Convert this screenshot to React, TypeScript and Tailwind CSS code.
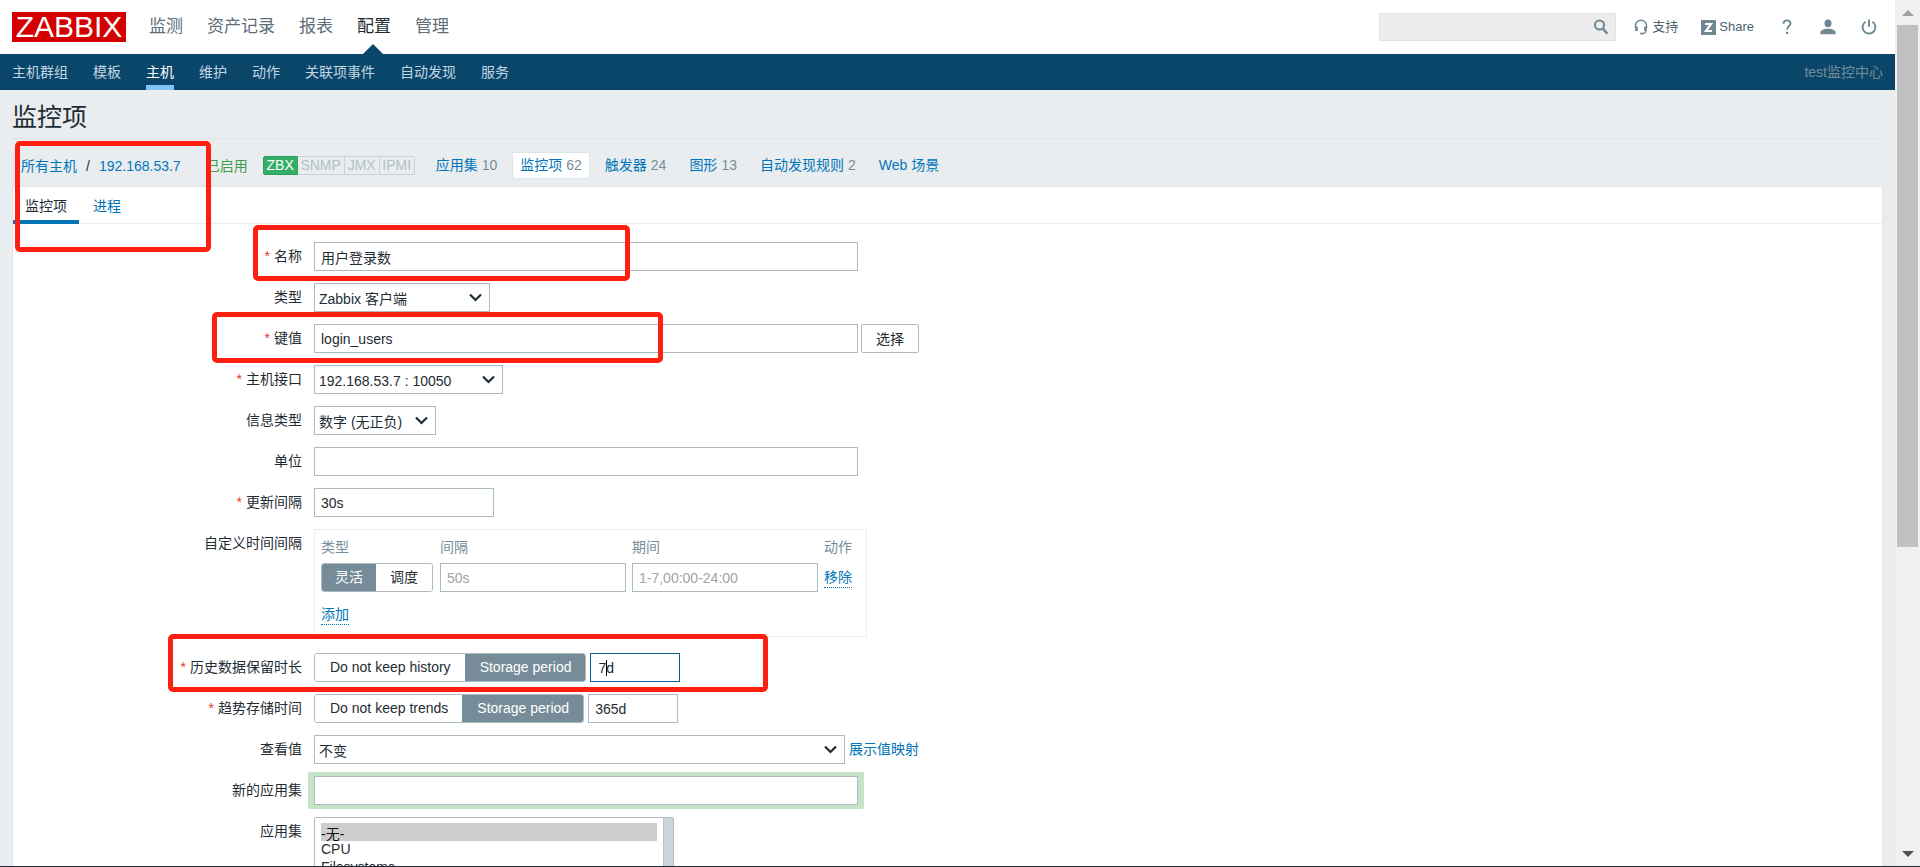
import React from "react";

const INPUT = "h-[29px] border border-[#acbbc2] bg-white px-1.5 text-[#1f2c33] placeholder-[#a3a3a3] outline-none";
const LINK = "text-[#0275b8]";

const topMenu = ["监测", "资产记录", "报表", "配置", "管理"];
const subMenu = ["主机群组", "模板", "主机", "维护", "动作", "关联项事件", "自动发现", "服务"];
const hostLinks = [
  { label: "应用集", count: "10" },
  { label: "监控项", count: "62" },
  { label: "触发器", count: "24" },
  { label: "图形", count: "13" },
  { label: "自动发现规则", count: "2" },
  { label: "Web 场景", count: "" },
];

function SearchIcon() {
  return (
    <svg width="16" height="16" viewBox="0 0 16 16" fill="none" stroke="#6f8793">
      <circle cx="6.5" cy="6" r="4.6" strokeWidth="2" />
      <path d="M9.8 9.6l4.6 5" strokeWidth="2.4" />
    </svg>
  );
}

function HeadsetIcon() {
  return (
    <svg width="14" height="16" viewBox="0 0 14 16" fill="none" stroke="#6f8793">
      <path d="M1.5 9V6.5a5.5 5.2 0 0 1 11 0V9" strokeWidth="1.5" />
      <path d="M2.500 7.500v4.500M11.500 7.500v4.500" strokeWidth="2.600" />
      <path d="M12 11.5c0 2.2-1.4 3-4 3" strokeWidth="1.3" />
      <path d="M6.2 14.6h2.6" strokeWidth="1.8" />
    </svg>
  );
}

function ShareIcon() {
  return (
    <svg width="15" height="15" viewBox="0 0 15 15">
      <rect width="15" height="15" fill="#6f8793" />
      <path d="M4 4h6L5 11h6" fill="none" stroke="#fff" strokeWidth="2.200" />
    </svg>
  );
}

function HelpIcon() {
  return (
    <svg width="10" height="16" viewBox="0 0 10 16" fill="none" stroke="#6f8793">
      <path d="M1.5 4.8C1.5 2.6 2.8 1.4 5 1.4s3.5 1.2 3.5 3.1C8.5 7 5.1 7.2 5.1 10.8" strokeWidth="1.9" />
      <path d="M4 13.9h2.2" strokeWidth="2.2" />
    </svg>
  );
}

function UserIcon() {
  return (
    <svg width="16" height="16" viewBox="0 0 16 16" fill="#6f8793">
      <ellipse cx="8" cy="4.3" rx="3.5" ry="3.9" />
      <path d="M.4 15.3v-1.6C.4 11.3 4 9.8 8 9.8s7.6 1.5 7.6 3.9v1.6z" />
    </svg>
  );
}

function PowerIcon() {
  return (
    <svg width="16" height="16" viewBox="0 0 16 16" fill="none" stroke="#6f8793" strokeWidth="1.9">
      <path d="M4.6 2.7a6.4 6.4 0 1 0 6.8 0" />
      <path d="M8 .4v7.4" />
    </svg>
  );
}

function Row({ label, htmlFor, required, children }: { label: string; htmlFor?: string; required?: boolean; children: React.ReactNode }) {
  return (
    <div className="mb-3 flex min-h-[29px] items-start gap-3">
      <label htmlFor={htmlFor} className="w-[289px] shrink-0 text-right leading-[28px]">
        {required && <span className="mr-1 text-[#e33734]">*</span>}
        {label}
      </label>
      <div className="flex items-start">{children}</div>
    </div>
  );
}

function Select({ id, value, width }: { id: string; value: string; width: string }) {
  return (
    <div className={`relative ${width}`}>
      <select id={id} className="block h-[29px] w-full appearance-none border border-[#acbbc2] bg-white px-1 pt-0.5 text-[#1f2c33] outline-none">
        <option>{value}</option>
      </select>
      <svg className="pointer-events-none absolute right-2 top-2.5" width="13" height="9" viewBox="0 0 13 9" fill="none" stroke="#1f2c33" strokeWidth="2.2">
        <path d="M1 1.500l5.500 5.500L12 1.500" />
      </svg>
    </div>
  );
}

function Segmented({ name, options, selected, pad }: { name: string; options: string[]; selected: number; pad: string }) {
  return (
    <div className="flex h-[29px] overflow-hidden rounded-[3px] border border-[#acbbc2] leading-[27px]" role="radiogroup">
      {options.map((o, i) => (
        <label key={o} className={`${pad} ${i === selected ? "-m-px bg-[#768d99] py-px text-white" : "bg-white"}`}>
          <input type="radio" name={name} defaultChecked={i === selected} className="sr-only" />
          {o}
        </label>
      ))}
    </div>
  );
}

function Header() {
  return (
    <header>
      <div className="flex h-[54px] items-center bg-white pl-3 pr-[18px]">
        <a href="#" className="flex h-[30px] w-[114px] items-center justify-center bg-[#d40000] text-3xl leading-none text-white">ZABBIX</a>
        <nav className="ml-[23px] flex h-full gap-6 text-[17px] leading-[54px]">
          {topMenu.map((m) => (
            <a key={m} href="#" className={m === "配置" ? "relative text-[#1f2c33]" : "text-[#5b6e79]"}>
              {m}
              {m === "配置" && (
                <svg className="absolute bottom-0 left-1.5" width="20" height="10" viewBox="0 0 20 10">
                  <path d="M0 10L10 0l10 10z" fill="#0a466a" />
                </svg>
              )}
            </a>
          ))}
        </nav>
        <div className="ml-auto flex items-center text-[13px] text-[#4f636e]">
          <div className="flex h-7 w-[237px] items-center border border-[#dfe4e7] bg-[#ececec] pr-1.5">
            <input aria-label="搜索" className="min-w-0 flex-1 bg-transparent px-1.5 outline-none" />
            <button type="button" aria-label="查找"><SearchIcon /></button>
          </div>
          <a href="#" className="ml-[18px] flex items-center gap-1"><HeadsetIcon />支持</a>
          <a href="#" className="ml-[23px] flex items-center gap-[3px]"><ShareIcon />Share</a>
          <a href="#" aria-label="帮助" className="ml-[28px]"><HelpIcon /></a>
          <a href="#" aria-label="用户" className="ml-[28px]"><UserIcon /></a>
          <a href="#" aria-label="退出" className="ml-[25px]"><PowerIcon /></a>
        </div>
      </div>
      <div className="flex h-9 justify-between bg-[#0a466a] px-3 leading-[36px]">
        <nav className="flex gap-[25px]">
          {subMenu.map((m) => (
            <a key={m} href="#" className={m === "主机" ? "border-b-[5px] border-[#81c4f5] text-white" : "text-[#c3d6e3]"}>{m}</a>
          ))}
        </nav>
        <span className="text-[#768d99]">test监控中心</span>
      </div>
    </header>
  );
}

function HostBar() {
  return (
    <div className="mb-[7px] flex h-[27px] items-center whitespace-nowrap pl-[9px]">
      <a href="#" className={LINK}>所有主机</a>
      <span className="mx-[9px]">/</span>
      <a href="#" className={LINK}>192.168.53.7</a>
      <span className="ml-[25px] text-[#429e47]">已启用</span>
      <div className="ml-[15px] flex h-[19px] text-center leading-[17px]">
        <span className="w-[35px] rounded-l-[2px] border border-[#2f9f5e] bg-[#34af67] text-white">ZBX</span>
        <span className="w-[47px] border-y border-r border-[#c8d2d7] text-[#b3bfc5]">SNMP</span>
        <span className="w-[35px] border-y border-r border-[#c8d2d7] text-[#b3bfc5]">JMX</span>
        <span className="w-[35px] rounded-r-[2px] border-y border-r border-[#c8d2d7] text-[#b3bfc5]">IPMI</span>
      </div>
      <nav className="ml-[13px] flex gap-[7px]">
        {hostLinks.map((l) => (
          <a
            key={l.label}
            href="#"
            className={`flex h-[27px] items-center gap-1 rounded-[2px] border px-[7px] pb-px ${LINK} ${l.label === "监控项" ? "border-[#dfe4e7] bg-white" : "border-transparent"}`}
          >
            {l.label}
            {l.count && <span className="text-[#768d99]">{l.count}</span>}
          </a>
        ))}
      </nav>
    </div>
  );
}

function IntervalTable() {
  return (
    <div className="mb-1 h-[108px] border border-[#ebeef0] px-1.5 pr-3 pt-1.5">
      <table>
        <thead>
          <tr className="text-left text-[#768d99]">
            <th className="h-[27px] w-[119px] pb-1.5 font-normal">类型</th>
            <th className="w-[192px] pb-1.5 font-normal">间隔</th>
            <th className="w-[192px] pb-1.5 font-normal">期间</th>
            <th className="w-[30px] pb-1.5 font-normal">动作</th>
          </tr>
        </thead>
        <tbody>
          <tr className="align-top">
            <td><div className="flex"><Segmented name="interval" options={["灵活", "调度"]} selected={0} pad="px-3.5" /></div></td>
            <td><input aria-label="间隔" placeholder="50s" className={`block w-[186px] ${INPUT}`} /></td>
            <td><input aria-label="期间" placeholder="1-7,00:00-24:00" className={`block w-[186px] ${INPUT}`} /></td>
            <td className="pt-1"><button type="button" className="border-b border-dotted border-[#0275b8] leading-5 text-[#0275b8]">移除</button></td>
          </tr>
        </tbody>
      </table>
      <button type="button" className="mt-3 border-b border-dotted border-[#0275b8] leading-5 text-[#0275b8]">添加</button>
    </div>
  );
}

function ItemForm() {
  return (
    <form className="pt-[18px]">
      <Row label="名称" htmlFor="name" required>
        <input id="name" defaultValue="用户登录数" className={`w-[544px] ${INPUT}`} />
      </Row>
      <Row label="类型" htmlFor="type"><Select id="type" value="Zabbix 客户端" width="w-[176px]" /></Row>
      <Row label="键值" htmlFor="key" required>
        <input id="key" defaultValue="login_users" className={`w-[544px] ${INPUT}`} />
        <button type="button" className="ml-[3px] h-[29px] w-[58px] rounded-[2px] border border-[#acbbc2] bg-white">选择</button>
      </Row>
      <Row label="主机接口" htmlFor="interface" required><Select id="interface" value="192.168.53.7 : 10050" width="w-[189px]" /></Row>
      <Row label="信息类型" htmlFor="valuetype"><Select id="valuetype" value="数字 (无正负)" width="w-[122px]" /></Row>
      <Row label="单位" htmlFor="units"><input id="units" className={`w-[544px] ${INPUT}`} /></Row>
      <Row label="更新间隔" htmlFor="delay" required>
        <input id="delay" defaultValue="30s" className={`w-[180px] ${INPUT}`} />
      </Row>
      <Row label="自定义时间间隔"><IntervalTable /></Row>
      <Row label="历史数据保留时长" htmlFor="history" required>
        <Segmented name="history" options={["Do not keep history", "Storage period"]} selected={1} pad="px-[15px]" />
        <div className="relative ml-1">
          <input id="history" defaultValue="7d" className="h-[29px] w-[90px] border border-[#0a5f94] bg-white px-[7px] text-[#1f2c33] outline-none" />
          <span aria-hidden="true" className="absolute left-4 top-[7px] h-4 w-px bg-black" />
        </div>
      </Row>
      <Row label="趋势存储时间" htmlFor="trends" required>
        <Segmented name="trends" options={["Do not keep trends", "Storage period"]} selected={1} pad="px-[15px]" />
        <input id="trends" defaultValue="365d" className={`ml-1 w-[90px] ${INPUT}`} />
      </Row>
      <Row label="查看值" htmlFor="valuemap">
        <Select id="valuemap" value="不变" width="w-[531px]" />
        <a href="#" className={`ml-1 leading-[29px] ${LINK}`}>展示值映射</a>
      </Row>
      <Row label="新的应用集" htmlFor="newapp">
        <div className="-mx-1.5 -my-1 rounded-[2px] bg-[#c5e3c7] px-1.5 py-1">
          <input id="newapp" className={`block w-[544px] ${INPUT}`} />
        </div>
      </Row>
      <Row label="应用集" htmlFor="apps">
        <div className="flex w-[360px] rounded-[2px] border border-[#acbbc2]">
          <select id="apps" multiple size={6} defaultValue={["-无-"]} className="flex-1 overflow-hidden px-1.5 py-[5px] text-[#1f2c33] outline-none">
            {["-无-", "CPU", "Filesystems", "General", "Memory", "Network interfaces"].map((o) => (
              <option key={o} value={o} className="h-[18px] p-0 leading-[18px]">{o}</option>
            ))}
          </select>
          <div className="w-[10px] border-l border-[#b7c3c9] bg-[#ccd5da]" />
        </div>
      </Row>
    </form>
  );
}

function ScrollBar() {
  return (
    <div aria-hidden="true" className="flex w-[25px] shrink-0 flex-col items-center bg-[#f0f0f0]">
      <div className="flex h-[25px] shrink-0 items-center">
        <svg width="12" height="6" viewBox="0 0 12 6"><path d="M0 6L6 0l6 6z" fill="#a3a3a3" /></svg>
      </div>
      <div className="w-[21px] flex-1"><div className="h-[64%] bg-[#c1c1c1]" /></div>
      <div className="flex h-[25px] shrink-0 items-center">
        <svg width="12" height="6" viewBox="0 0 12 6"><path d="M0 0h12L6 6z" fill="#505050" /></svg>
      </div>
    </div>
  );
}

function Highlights() {
  const box = "pointer-events-none absolute rounded-[5px] border-[5px] border-[#ff1f10]";
  return (
    <>
      <div className={`${box} left-[15px] top-[141px] h-[111px] w-[196px]`} />
      <div className={`${box} left-[253px] top-[225px] h-[56px] w-[377px]`} />
      <div className={`${box} left-[212px] top-[312px] h-[51px] w-[451px]`} />
      <div className={`${box} left-[168px] top-[634px] h-[58px] w-[600px]`} />
    </>
  );
}

export default function App() {
  return (
    <div className="relative flex h-screen overflow-hidden border-b border-[#1f2c33] bg-[#e9edf0] font-['Liberation_Sans','Noto_Sans_CJK_SC',sans-serif] text-sm text-[#1f2c33]">
      <div className="flex min-w-0 flex-1 flex-col overflow-hidden">
        <Header />
        <main className="flex min-h-0 flex-1 flex-col px-3">
          <h1 className="mb-[13px] h-[49px] shrink-0 border-b border-[#dfe4e7] text-[25px] leading-[54px]">监控项</h1>
          <HostBar />
          <section className="min-h-0 flex-1 overflow-hidden border border-b-0 border-[#dfe4e7] bg-white">
            <div className="flex h-[37px] border-b border-[#ebeef0]">
              <button type="button" className="h-[37px] border-b-4 border-[#0275b8] px-3 pt-1">监控项</button>
              <button type="button" className="h-[37px] border-b-4 border-transparent px-3.5 pt-1 text-[#0275b8]">进程</button>
            </div>
            <ItemForm />
          </section>
        </main>
      </div>
      <ScrollBar />
      <Highlights />
    </div>
  );
}
